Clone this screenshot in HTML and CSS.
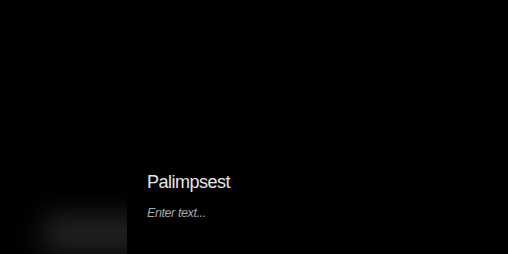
FILE: index.html
```html
<!DOCTYPE html>
<html lang="en">
<head>
  <meta charset="UTF-8">
  <meta name="viewport" content="width=device-width, initial-scale=1.0">
  <title>Palimpsest</title>
  <link rel="stylesheet" href="styles.css">
</head>
<body>
  <div class="app">
    <aside class="sidebar">
      <div class="glow"></div>
    </aside>
    <main class="editor">
      <h1 class="doc-title">Palimpsest</h1>
      <div class="doc-body">Enter text...</div>
    </main>
  </div>
</body>
</html>
```

FILE: styles.css
```css
html, body {
  margin: 0;
  height: 100%;
  background: #000;
}
body {
  font-family: "Liberation Sans", Arial, sans-serif;
  color: #e6e6e6;
  overflow: hidden;
}
.app {
  display: flex;
  height: 100%;
}
.sidebar {
  width: 127px;
  flex-shrink: 0;
  overflow: hidden;
  display: flex;
  flex-direction: column;
  justify-content: flex-end;
  padding: 0 0 0 44px;
  box-sizing: border-box;
}
.glow {
  width: 104px;
  height: 36px;
  margin-bottom: 2px;
  background: #242424;
  filter: blur(14px);
}
.editor {
  flex: 1;
  padding: 0 0 32px 20px;
  display: flex;
  flex-direction: column;
  justify-content: flex-end;
}
.doc-title {
  margin: 0 0 10px;
  font-size: 18px;
  font-weight: normal;
  letter-spacing: -0.5px;
  line-height: 24px;
}
.doc-body {
  font-size: 12.5px;
  font-style: italic;
  color: #a8a8a8;
  letter-spacing: -0.4px;
  line-height: 18px;
}
```
